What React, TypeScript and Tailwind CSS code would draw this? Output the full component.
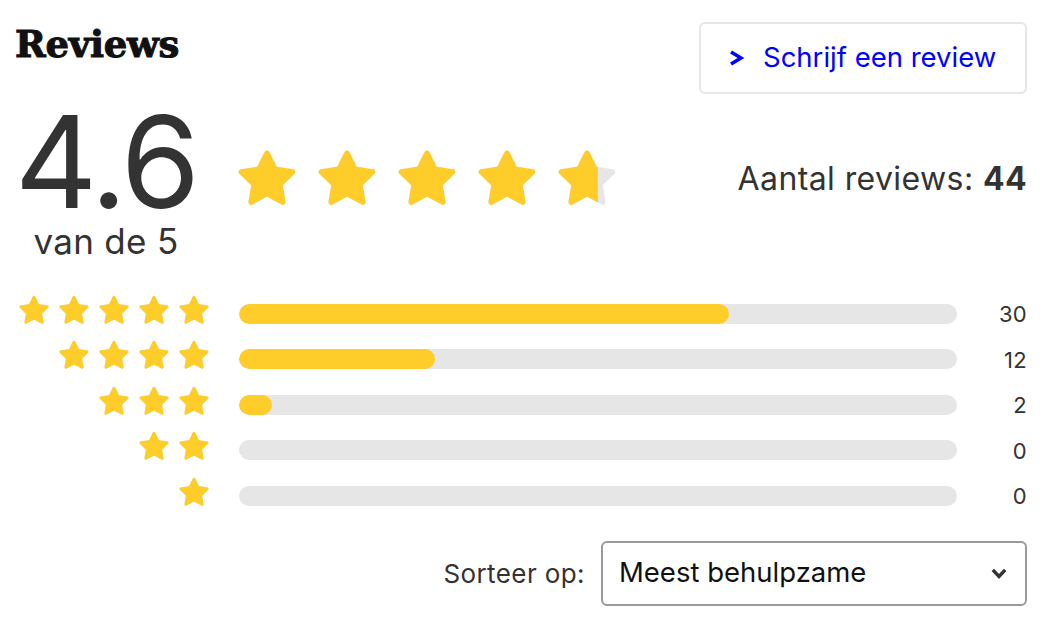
import { useId } from "react";

const rows = [
  { stars: 5, count: 30 },
  { stars: 4, count: 12 },
  { stars: 3, count: 2 },
  { stars: 2, count: 0 },
  { stars: 1, count: 0 },
];
const total = 44;

// fat rounded star, drawn as a polygon with a round stroke
const starPoints =
  "12,3 14.88,8.84 21.32,9.77 16.66,14.31 17.76,20.73 12,17.7 6.24,20.73 7.34,14.31 2.68,9.77 9.12,8.84";

function Star({ className, fill = 1 }: { className: string; fill?: number }) {
  const id = useId();
  const cut = 1.68 + fill * 20.64;
  return (
    <svg viewBox="0 0 24 24" className={className}>
      <polygon points={starPoints} fill="#e6e6e6" stroke="#e6e6e6" strokeWidth="2" strokeLinejoin="round" />
      <clipPath id={id}>
        <rect x="0" y="0" width={cut} height="24" />
      </clipPath>
      <polygon
        points={starPoints}
        fill="#ffcd29"
        stroke="#ffcd29"
        strokeWidth="2"
        strokeLinejoin="round"
        clipPath={`url(#${id})`}
      />
    </svg>
  );
}

export default function App() {
  return (
    <div className="w-[1064px] h-[638px] bg-white pl-[15px] pr-[37px] text-[#333] font-['Inter',sans-serif] overflow-hidden">
      {/* header */}
      <div className="flex justify-between items-start">
        <h2 className="mt-[26px] text-[37px] leading-none font-bold tracking-[-0.3px] text-[#111] [-webkit-text-stroke:1px_#111] font-['DejaVu_Serif',serif]">
          Reviews
        </h2>
        <button className="mt-[22px] h-[72px] w-[328px] border-2 border-[#e6e6e6] rounded-md flex items-center pl-[28px] gap-[19px] text-[#0000ff] text-[27.5px]">
          <svg viewBox="0 0 15 16" className="w-[15px] h-[16px]">
            <polyline points="2,2 12,8 2,14" fill="none" stroke="#0000ff" strokeWidth="3.6" strokeLinejoin="miter" />
          </svg>
          <span>Schrijf een review</span>
        </button>
      </div>

      {/* summary */}
      <div className="flex items-center mt-[12px]">
        <div className="flex flex-col items-center w-[186px] pr-[4px]">
          <span className="block text-[128px] leading-[112px] tracking-[-3px]">4.6</span>
          <span className="block text-[35px] leading-[34px] mt-[6px] tracking-[0.3px]">van de 5</span>
        </div>
        <div className="flex gap-[14px] ml-[33px] -mt-[8px]">
          <Star className="w-[66px] h-[66px]" />
          <Star className="w-[66px] h-[66px]" />
          <Star className="w-[66px] h-[66px]" />
          <Star className="w-[66px] h-[66px]" />
          <Star className="w-[66px] h-[66px]" fill={0.69} />
        </div>
        <div className="ml-auto -mt-[6px] text-[32px] tracking-[0.4px]">
          Aantal reviews: <b className="font-bold">44</b>
        </div>
      </div>

      {/* distribution */}
      <div className="mt-[29px] flex flex-col">
        {rows.map((r) => (
          <div key={r.stars} className="flex items-center h-[45.5px]">
            <div className="w-[196px] flex justify-end gap-[6px]">
              {Array.from({ length: r.stars }).map((_, i) => (
                <Star key={i} className="w-[34px] h-[34px]" />
              ))}
            </div>
            <div className="ml-[28px] mt-[8px] w-[718px] h-[20px] rounded-full bg-[#e6e6e6] overflow-hidden">
              <div className="h-full rounded-full bg-[#ffcd29]" style={{ width: `${(r.count / total) * 100}%` }} />
            </div>
            <div className="flex-1 mt-[10px] text-right text-[22px] tracking-[0.3px]">{r.count}</div>
          </div>
        ))}
      </div>

      {/* sort */}
      <div className="mt-[26px] flex justify-end items-center gap-[16px]">
        <span className="text-[26px] tracking-[0.4px] text-[#333]">Sorteer op:</span>
        <div className="w-[426px] h-[65px] border-2 border-[#999] rounded-md flex items-center justify-between pl-[16px] pr-[18px] text-[27.5px] text-[#111]">
          <span>Meest behulpzame</span>
          <svg viewBox="0 0 16 11" className="w-[16px] h-[11px]">
            <polyline points="1.8,1.8 8,8.5 14.2,1.8" fill="none" stroke="#333" strokeWidth="3.4" />
          </svg>
        </div>
      </div>
    </div>
  );
}
